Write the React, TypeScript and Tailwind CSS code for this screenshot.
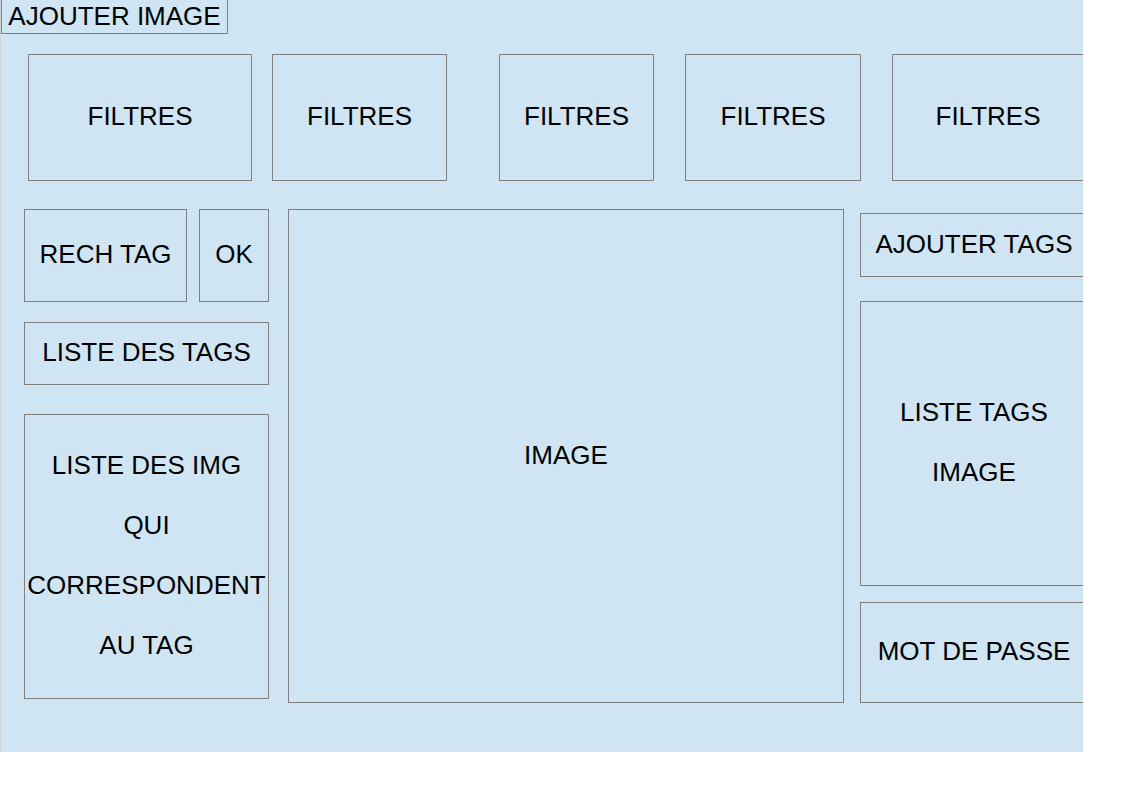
import type { ReactNode } from 'react'

function Box({ className, children }: { className: string; children: ReactNode }) {
  return (
    <div className={`shrink-0 border border-[#808080] pb-[3px] flex flex-col items-center justify-center text-center ${className}`}>
      {children}
    </div>
  )
}

export default function App() {
  return (
    <div className="min-h-screen bg-white">
      <div className="w-[1083px] h-[752px] overflow-hidden bg-[#cfe5f3] border-l border-[#d3d3d3] font-['Liberation_Sans',Arial,sans-serif] text-[26px] leading-none text-black">
        <div className="w-[227px] h-[34px] pb-[2px] border-l border-r border-b border-[#808080] flex items-center justify-center">
          AJOUTER IMAGE
        </div>

        {/* filtres */}
        <div className="flex pl-[27px] mt-[20px]">
          <Box className="w-[224px] h-[127px]">FILTRES</Box>
          <Box className="w-[175px] h-[127px] ml-[20px]">FILTRES</Box>
          <Box className="w-[155px] h-[127px] ml-[52px]">FILTRES</Box>
          <Box className="w-[176px] h-[127px] ml-[31px]">FILTRES</Box>
          <Box className="w-[192px] h-[127px] ml-[31px]">FILTRES</Box>
        </div>

        <div className="flex items-start pl-[23px] mt-[28px]">
          {/* colonne gauche */}
          <div className="flex flex-col w-[245px] shrink-0">
            <div className="flex">
              <Box className="w-[163px] h-[93px]">RECH TAG</Box>
              <Box className="w-[70px] h-[93px] ml-[12px]">OK</Box>
            </div>
            <Box className="w-[245px] h-[63px] mt-[20px]">LISTE DES TAGS</Box>
            <Box className="w-[245px] h-[285px] mt-[29px] leading-[60px]">
              <div>LISTE DES IMG</div>
              <div>QUI</div>
              <div>CORRESPONDENT</div>
              <div>AU TAG</div>
            </Box>
          </div>

          <Box className="w-[556px] h-[494px] ml-[19px]">IMAGE</Box>

          {/* colonne droite */}
          <div className="flex flex-col w-[228px] shrink-0 ml-[16px]">
            <Box className="w-[228px] h-[64px] mt-[4px]">AJOUTER TAGS</Box>
            <Box className="w-[228px] h-[285px] mt-[24px] leading-[60px]">
              <div>LISTE TAGS</div>
              <div>IMAGE</div>
            </Box>
            <Box className="w-[228px] h-[101px] mt-[16px]">MOT DE PASSE</Box>
          </div>
        </div>
      </div>
    </div>
  )
}
